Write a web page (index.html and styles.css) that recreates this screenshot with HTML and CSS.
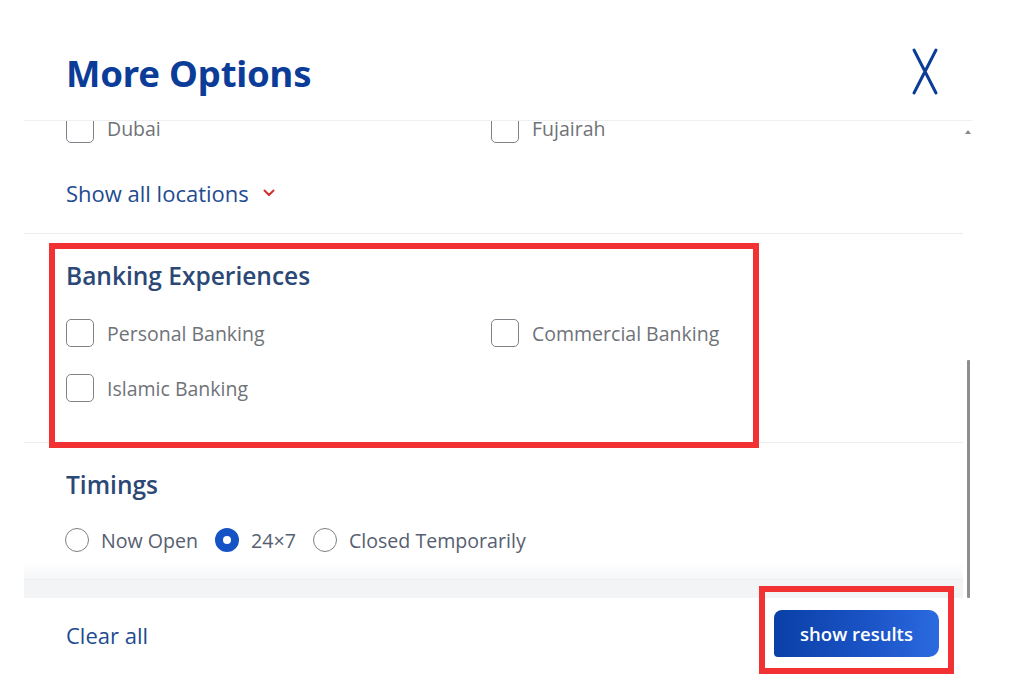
FILE: index.html
```html
<!DOCTYPE html>
<html lang="en">
<head>
<meta charset="utf-8">
<title>More Options</title>
<link rel="stylesheet" href="styles.css">
</head>
<body>
<div class="modal">
  <header class="modal-header">
    <h1 class="title">More Options</h1>
    <button class="close" aria-label="Close">
      <svg width="30" height="50" viewBox="0 0 30 50"><path d="M4 3 L26 46 M26 3 L4 46" stroke="#0b3d98" stroke-width="3" stroke-linecap="round" fill="none"/></svg>
    </button>
  </header>

  <div class="scroll">
    <div class="scroll-content">
      <section class="section locations">
        <div class="grid">
          <label class="check"><span class="box"></span><span class="lbl">Dubai</span></label>
          <label class="check"><span class="box"></span><span class="lbl">Fujairah</span></label>
        </div>
        <a class="show-all">Show all locations
          <svg width="12" height="8" viewBox="0 0 12 8"><path d="M1.5 1.5 L6 6 L10.5 1.5" stroke="#d0312d" stroke-width="2" fill="none" stroke-linecap="round" stroke-linejoin="round"/></svg>
        </a>
      </section>

      <section class="section banking">
        <h2 class="sec-title">Banking Experiences</h2>
        <div class="grid rows">
          <label class="check"><span class="box"></span><span class="lbl">Personal Banking</span></label>
          <label class="check"><span class="box"></span><span class="lbl">Commercial Banking</span></label>
          <label class="check"><span class="box"></span><span class="lbl">Islamic Banking</span></label>
        </div>
      </section>

      <section class="section timings">
        <h2 class="sec-title">Timings</h2>
        <div class="radios">
          <label class="radio"><span class="dot"></span><span class="rlbl">Now Open</span></label>
          <label class="radio checked"><span class="dot"></span><span class="rlbl">24×7</span></label>
          <label class="radio"><span class="dot"></span><span class="rlbl">Closed Temporarily</span></label>
        </div>
      </section>
    </div>
    <div class="fade"></div>
    <div class="scrollbar-arrow"></div>
  </div>
  <div class="band"></div>

  <footer class="modal-footer">
    <a class="clear">Clear all</a>
    <button class="primary">show results</button>
  </footer>

  <div class="scrollbar-thumb"></div>
  <div class="annot annot-banking"></div>
  <div class="annot annot-button"></div>
</div>
</body>
</html>
```

FILE: styles.css
```css
* { box-sizing: border-box; }
html, body { margin: 0; padding: 0; background: #fff; }
body { font-family: "Open Sans", "Noto Sans", sans-serif; width: 1024px; height: 699px; overflow: hidden; }

.modal { position: relative; width: 1024px; height: 699px; padding-left: 24px; padding-right: 52px; display: flex; flex-direction: column; }

.modal-header { height: 121px; flex: none; border-bottom: 1px solid #eeeff1; display: flex; align-items: flex-start; justify-content: space-between; padding-left: 42px; padding-right: 32px; }
.title { margin: 48px 0 0 0; font-family: "Noto Sans", sans-serif; font-weight: 700; font-size: 36.5px; line-height: 50px; color: #0b3d98; letter-spacing: -0.2px; }
.close { margin-top: 47px; background: none; border: 0; padding: 0; width: 30px; height: 50px; cursor: pointer; }

.scroll { position: relative; height: 459px; flex: none; overflow: hidden; }
.scroll-content { width: 939px; }
.section { padding: 0 42px; border-bottom: 1px solid #ececee; }

.grid { display: grid; grid-template-columns: 425px 1fr; }
.grid.rows { row-gap: 27px; }

.check { display: flex; align-items: center; height: 28px; gap: 13px; }
.box { width: 28px; height: 28px; border: 1.5px solid #808488; border-radius: 5px; flex: none; }
.lbl { font-size: 19.5px; color: #6f7378; letter-spacing: 0; }

.locations { margin-top: -6px; padding-bottom: 26px; }
.locations .check { align-items: flex-start; }
.locations .lbl { line-height: 14px; margin-top: 7px; }
.show-all { display: inline-flex; align-items: center; gap: 14px; margin-top: 37px; font-size: 22px; line-height: 26px; color: #1d4b8f; }

.sec-title { margin: 0; font-size: 24.5px; line-height: 30px; font-weight: 600; color: #2b4876; }
.banking { padding-top: 27px; padding-bottom: 40px; }
.banking .sec-title { margin-bottom: 28px; }

.timings { padding-top: 27px; padding-bottom: 40px; border-bottom: 0; }
.timings .sec-title { margin-bottom: 28px; }
.radios { display: flex; align-items: center; margin-left: -1px; }
.radio { display: flex; align-items: center; height: 24px; margin-right: 17px; }
.dot { width: 24px; height: 24px; border-radius: 50%; border: 1.5px solid #7d8185; flex: none; margin-right: 12px; }
.radio.checked .dot { border: 8px solid #1553c4; background: #fff; }
.rlbl { font-size: 19.6px; color: #566070; }

.fade { position: absolute; left: 0; right: 9px; bottom: 0; height: 18px; background: linear-gradient(to bottom, rgba(255,255,255,0), #f5f6f8); border-bottom: 1px solid #eceef0; }
.scrollbar-arrow { position: absolute; right: 1px; top: 9px; width: 0; height: 0; border-left: 3px solid transparent; border-right: 3px solid transparent; border-bottom: 4px solid #8a8a8a; }
.scrollbar-thumb { position: absolute; left: 967px; top: 360px; height: 238px; width: 3px; background: #8e8e8e; border-radius: 1px; }

.band { height: 18px; flex: none; background: #f3f4f6; margin-right: 9px; }

.modal-footer { display: flex; align-items: flex-start; justify-content: space-between; padding-left: 42px; padding-right: 33px; height: 101px; }
.clear { margin-top: 23px; font-size: 22px; line-height: 28px; color: #1d4b8f; }
.primary { margin-top: 12px; width: 165px; height: 47px; border: 0; border-radius: 8px 10px 10px 4px; background: linear-gradient(90deg, #0a3fa6 0%, #1c55c8 60%, #2b6ae0 100%); color: #fff; font-family: "Open Sans", sans-serif; font-weight: 600; font-size: 18.5px; cursor: pointer; }

.annot { position: absolute; border: 6px solid #f23232; pointer-events: none; }
.annot-banking { left: 49px; top: 243px; width: 710px; height: 205px; }
.annot-button { left: 759px; top: 586px; width: 195px; height: 88px; }
```
